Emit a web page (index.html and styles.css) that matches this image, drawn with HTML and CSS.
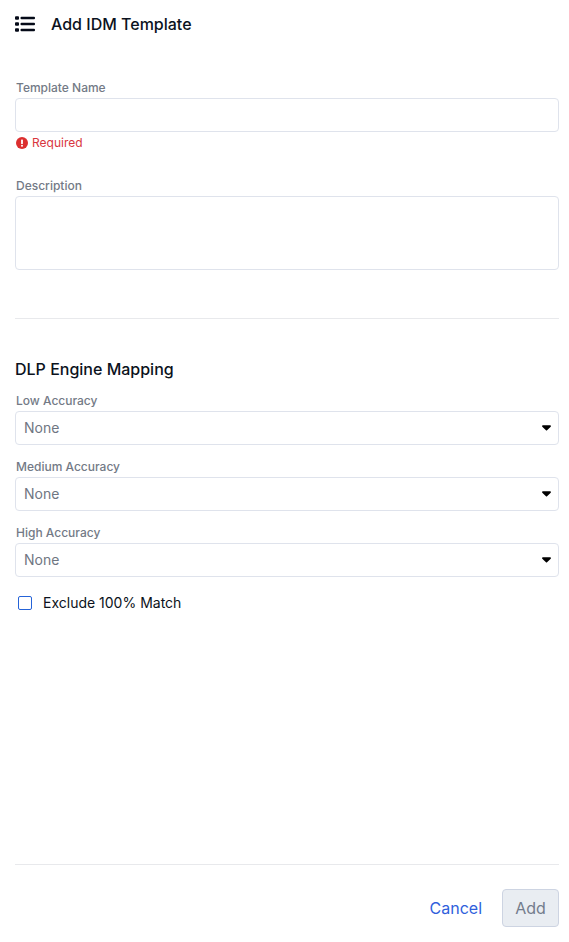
FILE: index.html
```html
<!DOCTYPE html>
<html lang="en">

<head>
    <meta charset="UTF-8">
    <meta name="viewport" content="width=device-width, initial-scale=1.0">
    <title>Add IDM Template</title>
    <link rel="stylesheet" href="styles.css">
</head>

<body>
    <div class="panel">
        <div class="panel-header">
            <svg class="header-icon" width="20" height="16" viewBox="0 0 20 16">
                <rect x="0" y="0.3" width="4" height="3.4" rx="1"></rect>
                <rect x="0" y="6.3" width="4" height="3.4" rx="1"></rect>
                <rect x="0" y="12.3" width="4" height="3.4" rx="1"></rect>
                <rect x="5.5" y="0.8" width="14.5" height="2.4" rx="1"></rect>
                <rect x="5.5" y="6.8" width="14.5" height="2.4" rx="1"></rect>
                <rect x="5.5" y="12.8" width="14.5" height="2.4" rx="1"></rect>
            </svg>
            <h1>Add IDM Template</h1>
        </div>

        <div class="form-group name-group">
            <label>Template Name</label>
            <input type="text" class="text-input">
            <div class="error-message">
                <svg width="12" height="12" viewBox="0 0 12 12">
                    <circle cx="6" cy="6" r="6" fill="#dc2f2f"></circle>
                    <rect x="5.1" y="2.4" width="1.8" height="4.6" rx="0.6" fill="#fff"></rect>
                    <circle cx="6" cy="8.7" r="1" fill="#fff"></circle>
                </svg>
                <span>Required</span>
            </div>
        </div>

        <div class="form-group description-group">
            <label>Description</label>
            <textarea class="text-area"></textarea>
        </div>

        <hr class="divider mapping-divider">

        <h2>DLP Engine Mapping</h2>

        <div class="form-group select-group">
            <label>Low Accuracy</label>
            <div class="select-box">
                <span>None</span>
                <svg class="caret" width="9" height="6" viewBox="0 0 10 6"><path d="M1 0h8c.8 0 1.2.9.7 1.5L5.6 5.6c-.3.3-.9.3-1.2 0L.3 1.5C-.2.9.2 0 1 0z"></path></svg>
            </div>
        </div>
        <div class="form-group select-group">
            <label>Medium Accuracy</label>
            <div class="select-box">
                <span>None</span>
                <svg class="caret" width="9" height="6" viewBox="0 0 10 6"><path d="M1 0h8c.8 0 1.2.9.7 1.5L5.6 5.6c-.3.3-.9.3-1.2 0L.3 1.5C-.2.9.2 0 1 0z"></path></svg>
            </div>
        </div>
        <div class="form-group select-group">
            <label>High Accuracy</label>
            <div class="select-box">
                <span>None</span>
                <svg class="caret" width="9" height="6" viewBox="0 0 10 6"><path d="M1 0h8c.8 0 1.2.9.7 1.5L5.6 5.6c-.3.3-.9.3-1.2 0L.3 1.5C-.2.9.2 0 1 0z"></path></svg>
            </div>
        </div>

        <div class="check-row">
            <span class="check-box"></span>
            <span>Exclude 100% Match</span>
        </div>

        <div class="panel-footer">
            <a class="cancel-btn">Cancel</a>
            <button class="add-btn" disabled>Add</button>
        </div>
    </div>
</body>

</html>
```

FILE: styles.css
```css
* {
    margin: 0;
    padding: 0;
    box-sizing: border-box;
}

body {
    font-family: Inter, 'Liberation Sans', sans-serif;
    background: white;
    color: #0b1220;
}

.panel {
    height: 942px;
    padding: 0 10px 15px 15px;
    display: flex;
    flex-direction: column;
}

.panel-header {
    height: 48px;
    display: flex;
    align-items: center;
    gap: 16px;
}

.panel-header h1 {
    font-size: 16px;
    font-weight: 500;
}

.header-icon {
    fill: #050a18;
}

.form-group label {
    display: block;
    height: 15px;
    margin-left: 1px;
    margin-bottom: 3px;
    color: #737a86;
    font-size: 12px;
    font-weight: 500;
    line-height: 15px;
}

.name-group {
    margin-top: 32px;
}

.description-group {
    margin-top: 28px;
}

.text-input,
.text-area,
.select-box {
    display: block;
    width: 100%;
    background: white;
    border: 1px solid #dfe3ec;
    border-radius: 4px;
}

.text-input {
    height: 34px;
}

.text-area {
    height: 74px;
    resize: none;
}

.error-message {
    display: flex;
    align-items: center;
    gap: 4px;
    height: 15px;
    margin-top: 3px;
    margin-left: 1px;
    color: #d9363e;
    font-size: 12px;
}

.divider,
.panel-footer {
    border: none;
    border-top: 1px solid #e8e9ec;
}

.mapping-divider {
    margin-top: 48px;
}

h2 {
    margin-top: 40px;
    font-size: 16px;
    font-weight: 500;
    line-height: 20px;
}

.select-group {
    margin-bottom: 14px;
}

h2 + .select-group {
    margin-top: 14px;
}

.select-box {
    height: 34px;
    display: flex;
    align-items: center;
    justify-content: space-between;
    padding: 0 7px 0 8px;
    color: #6f7682;
    font-size: 14px;
}

.select-box span {
    padding-bottom: 2px;
}

.caret {
    fill: #000;
}

.check-row {
    display: flex;
    align-items: center;
    gap: 11px;
    margin-left: 3px;
    height: 23px;
    font-size: 14px;
}

.check-box {
    width: 14px;
    height: 14px;
    border: 1px solid #2563d8;
    border-radius: 2px;
}

.panel-footer {
    margin-top: auto;
    padding-top: 24px;
    display: flex;
    justify-content: flex-end;
    align-items: center;
    gap: 20px;
}

.cancel-btn {
    color: #2f5fdc;
    font-size: 16px;
}

.add-btn {
    width: 57px;
    height: 38px;
    background: #e9edf2;
    border: 1px solid #cdd4e2;
    border-radius: 4px;
    color: #737c8c;
    font-family: inherit;
    font-size: 16px;
}
```
